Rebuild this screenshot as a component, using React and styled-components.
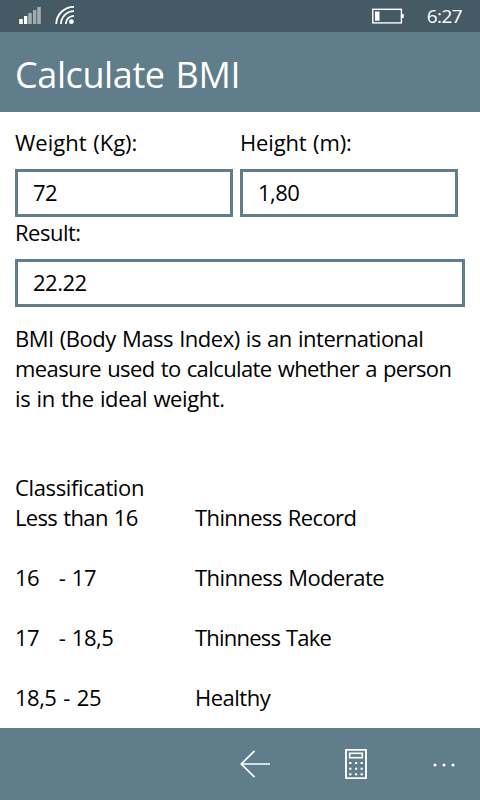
import React from "react";
import styled, { createGlobalStyle } from 'styled-components'

const GlobalStyle = createGlobalStyle`
    * {
        box-sizing: border-box;
    }
    body {
        margin: 0;
        background-color: #fff;
        font-family: "Open Sans", "Noto Sans", sans-serif;
    }
`
const Phone = styled.div`
    width: 480px;
    height: 800px;
    display: flex;
    flex-direction: column;
    overflow: hidden;
    background-color: #fff;
    color: #000;
`
const StatusBar = styled.div`
    height: 32px;
    flex-shrink: 0;
    display: flex;
    align-items: center;
    justify-content: space-between;
    padding: 0 18px;
    background-color: #455a64;
    color: #fff;
`
const StatusGroup = styled.div`
    height: 32px;
    display: flex;
    align-items: center;
    gap: ${({gap}) => gap};
`
const Clock = styled.span`
    font-size: 19px;
    line-height: 32px;
    letter-spacing: -0.6px;
`
const Header = styled.header`
    height: 80px;
    flex-shrink: 0;
    padding: 18px 15px 0;
    background-color: #607d8b;
    color: #fff;
`
const Title = styled.h1`
    margin: 0;
    font-size: 36px;
    line-height: 50px;
    font-weight: 400;
    white-space: nowrap;
    letter-spacing: -0.4px;
    word-spacing: 2px;
`
const Content = styled.main`
    flex: 1;
    min-height: 0;
    overflow: hidden;
    padding: 15px 15px 0;
    font-size: 22px;
    line-height: 30px;
`
const Fields = styled.div`
    display: grid;
    grid-template-columns: 218px 218px;
    column-gap: 7px;
`
const Field = styled.div`
    display: flex;
    flex-direction: column;
    gap: 12px;
`
const Text = styled.span`
    display: block;
    white-space: pre;
    letter-spacing: ${({track}) => track || '-0.5px'};
    word-spacing: ${({space}) => space || '1px'};
`
const Input = styled.input`
    width: 100%;
    height: 48px;
    padding: 0 15px 3px;
    border: 3px solid #607d8b;
    border-radius: 0;
    outline: none;
    background-color: #fff;
    color: #000;
    font: inherit;
    letter-spacing: -0.5px;
`
const Description = styled.p`
    margin: 16px 0 0;
`
const Classification = styled.section`
    margin-top: 59px;
`
const Table = styled.div`
    display: grid;
    grid-template-columns: 180px 1fr;
    row-gap: 30px;
`
const AppBar = styled.footer`
    height: 72px;
    flex-shrink: 0;
    display: flex;
    align-items: center;
    justify-content: flex-end;
    background-color: #607d8b;
`
const AppBarButton = styled.button`
    width: ${({width}) => width};
    height: 72px;
    padding: 0;
    border: none;
    background-color: transparent;
    color: #fff;
    display: flex;
    align-items: center;
    justify-content: center;
`

const SignalIcon = () => (
    <svg width="24" height="32" viewBox="18 0 24 32" fill="#fff">
        <rect x="19.2" y="19" width="3.6" height="5" />
        <rect x="24" y="16" width="3.3" height="8" />
        <g opacity="0.5">
            <rect x="28.2" y="13" width="3.6" height="11" />
            <rect x="33" y="10" width="3.3" height="14" />
            <rect x="37.2" y="7" width="3.6" height="17" />
        </g>
    </svg>
)
const WifiIcon = () => (
    <svg width="19" height="32" viewBox="55 0 19 32" fill="none" stroke="#fff" strokeWidth="1.8">
        <circle cx="71.4" cy="21.7" r="2.4" fill="#fff" stroke="none" />
        <path d="M65.8 24 A8.2 8.2 0 0 1 74 15.8" />
        <path d="M61 24 A13 13 0 0 1 74 11.2" />
        <path d="M56.2 24 A17.6 17.6 0 0 1 74 6.8" />
    </svg>
)
const BatteryIcon = () => (
    <svg width="33" height="32" viewBox="372 0 33 32">
        <rect x="372.8" y="9.3" width="28.6" height="13.6" fill="none" stroke="#fff" strokeWidth="1.4" />
        <rect x="375" y="11.5" width="4.5" height="9.2" fill="#fff" />
        <rect x="402" y="14" width="1.7" height="4" fill="#fff" />
    </svg>
)
const BackIcon = () => (
    <svg width="32" height="30" viewBox="240 749 32 30" fill="none" stroke="#fff" strokeWidth="1.7">
        <path d="M270 764 H241.5 M254.5 750.8 L241.3 764 L254.5 777.2" />
    </svg>
)
const CalculatorIcon = () => (
    <svg width="22" height="30" viewBox="345 749 22 30">
        <rect x="346" y="749.8" width="20" height="28.4" fill="none" stroke="#fff" strokeWidth="1.9" />
        <rect x="349.7" y="753.3" width="12.6" height="4.4" fill="none" stroke="#fff" strokeWidth="1.6" />
        {[762, 767.7, 773.3].map((y) => [349.2, 355, 360.6].map((x) => (
            <rect key={x + '-' + y} x={x} y={y} width="2.2" height="2" fill="#fff" />
        )))}
    </svg>
)
const MoreIcon = () => (
    <svg width="24" height="6" viewBox="432 761 24 6" fill="#fff">
        <circle cx="435" cy="765" r="1.5" />
        <circle cx="444" cy="765" r="1.5" />
        <circle cx="453" cy="765" r="1.5" />
    </svg>
)

const description = [
    {text: 'BMI (Body Mass Index) is an international', track: '-0.5px'},
    {text: 'measure used to calculate whether a person', track: '-0.6px'},
    {text: 'is in the ideal weight.', track: '-0.4px'},
]
const ranges = [
    {range: 'Less than 16', rangeTrack: '-0.65px', label: 'Thinness Record', labelTrack: '-0.6px'},
    {range: '16   - 17', space: '1.3px', label: 'Thinness Moderate', labelTrack: '-0.55px'},
    {range: '17   - 18,5', space: '1.3px', label: 'Thinness Take', labelTrack: '-0.8px'},
    {range: '18,5 - 25', space: '1.7px', label: 'Healthy'},
]

const App = () => {
    return(
        <Phone>
            <GlobalStyle />
            <StatusBar>
                <StatusGroup gap="13px">
                    <SignalIcon />
                    <WifiIcon />
                </StatusGroup>
                <StatusGroup gap="22px">
                    <BatteryIcon />
                    <Clock>6:27</Clock>
                </StatusGroup>
            </StatusBar>
            <Header>
                <Title>Calculate BMI</Title>
            </Header>
            <Content>
                <Fields>
                    <Field>
                        <Text track="0px">Weight (Kg):</Text>
                        <Input defaultValue="72" />
                    </Field>
                    <Field>
                        <Text track="-0.15px">Height (m):</Text>
                        <Input defaultValue="1,80" />
                    </Field>
                </Fields>
                <Field>
                    <Text>Result:</Text>
                    <Input defaultValue="22.22" readOnly />
                </Field>
                <Description>
                    {description.map(({text, track}) => <Text key={text} track={track}>{text}</Text>)}
                </Description>
                <Classification>
                    <Text track="-0.35px">Classification</Text>
                    <Table>
                        {ranges.map(({range, label, rangeTrack, labelTrack, space}) => (
                            <React.Fragment key={range}>
                                <Text track={rangeTrack} space={space}>{range}</Text>
                                <Text track={labelTrack}>{label}</Text>
                            </React.Fragment>
                        ))}
                    </Table>
                </Classification>
            </Content>
            <AppBar>
                <AppBarButton width="96px" aria-label="Back"><BackIcon /></AppBarButton>
                <AppBarButton width="104px" aria-label="Calculate"><CalculatorIcon /></AppBarButton>
                <AppBarButton width="72px" aria-label="More"><MoreIcon /></AppBarButton>
            </AppBar>
        </Phone>
    )
}
export default App
